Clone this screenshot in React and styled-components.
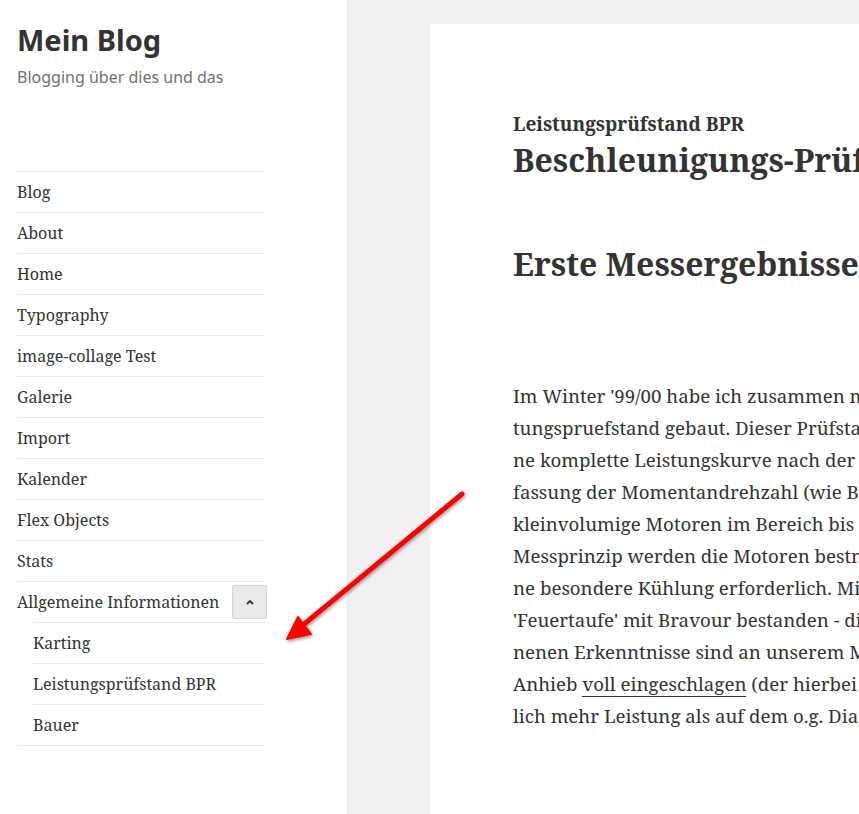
import React from "react";
import styled, { createGlobalStyle } from "styled-components";

const GlobalStyle = createGlobalStyle`
  html, body {
    margin: 0;
    padding: 0;
    height: 100%;
    overflow: hidden;
    background: #f1f1f1;
  }
  #root {
    height: 100%;
  }
`;

const menu = [
  { label: "Blog" },
  { label: "About" },
  { label: "Home" },
  { label: "Typography" },
  { label: "image-collage Test" },
  { label: "Galerie" },
  { label: "Import" },
  { label: "Kalender" },
  { label: "Flex Objects" },
  { label: "Stats" },
  {
    label: "Allgemeine Informationen",
    children: ["Karting", "Leistungsprüfstand BPR", "Bauer"],
  },
];

const lines = [
  "Im Winter '99/00 habe ich zusammen mit einem Freund einen Leis-",
  "tungspruefstand gebaut. Dieser Prüfstand ermöglicht es, ei-",
  "ne komplette Leistungskurve nach der Beschleunigungsmethode, Er-",
  "fassung der Momentandrehzahl (wie Bosch) aufzunehmen, für",
  "kleinvolumige Motoren im Bereich bis 20 PS. Durch dieses",
  "Messprinzip werden die Motoren bestmöglich geschont, es ist kei-",
  "ne besondere Kühlung erforderlich. Mittlerweile hat er seine",
  "'Feuertaufe' mit Bravour bestanden - die damit gewon-",
  "nenen Erkenntnisse sind an unserem Motor gleich auf",
  null,
  "lich mehr Leistung als auf dem o.g. Diagramm zu sehen).",
];

const Page = styled.div`
  display: flex;
  height: 100%;
  position: relative;
`;

const Sidebar = styled.aside`
  width: 347px;
  flex-shrink: 0;
  background: #fff;
  box-shadow: 0 0 1px rgba(0, 0, 0, 0.15);
  padding: 24px 82px 0 17px;
  box-sizing: border-box;
  position: relative;
  z-index: 1;
`;

const SiteTitle = styled.h1`
  margin: 0;
  font-family: "Noto Sans", sans-serif;
  font-weight: 700;
  font-size: 29px;
  line-height: 32px;
  color: #333;
`;

const Tagline = styled.p`
  margin: 9px 0 0;
  font-family: "Noto Sans", sans-serif;
  font-size: 16px;
  line-height: 24px;
  color: #707070;
`;

const NavList = styled.ul`
  list-style: none;
  margin: 82px 0 0;
  padding: 0;
  border-top: 1px solid #eaeaea;
  border-bottom: 1px solid #eaeaea;
  font-family: "Noto Serif", "DejaVu Serif", serif;
`;

const NavItem = styled.li`
  border-top: ${(p) => (p.$first ? "none" : "1px solid #eaeaea")};
`;

const NavRow = styled.div`
  display: flex;
  align-items: center;
  justify-content: space-between;
`;

const NavLink = styled.a`
  display: block;
  padding: 8px 0;
  font-size: 16px;
  line-height: 24px;
  color: #333;
  text-decoration: none;
`;

const Toggle = styled.button`
  width: 35px;
  height: 34px;
  margin-right: -2px;
  padding: 0;
  background: #eaeaea;
  border: 1px solid #d6d6d6;
  border-radius: 2px;
  display: flex;
  align-items: center;
  justify-content: center;
`;

const SubList = styled.ul`
  list-style: none;
  margin: 0 0 0 16px;
  padding: 0;
`;

const SubItem = styled.li`
  border-top: 1px solid #eaeaea;
`;

const Main = styled.main`
  flex: 1;
  overflow: hidden;
  padding: 24px 0 0 83px;
`;

const Card = styled.article`
  width: 760px;
  min-height: 900px;
  background: #fff;
  padding: 86px 0 0 83px;
  box-sizing: border-box;
  font-family: "Noto Serif", "DejaVu Serif", serif;
  color: #333;
`;

const Kicker = styled.div`
  font-size: 19px;
  font-weight: 700;
  line-height: 28px;
  margin-bottom: 2px;
`;

const Title = styled.h1`
  margin: 0;
  font-size: 32px;
  font-weight: 700;
  line-height: 40px;
  white-space: nowrap;
`;

const Subhead = styled.h2`
  margin: 64px 0 0;
  font-size: 32px;
  font-weight: 700;
  line-height: 40px;
  white-space: nowrap;
`;

const Body = styled.p`
  margin: 96px 0 0;
  font-size: 18.7px;
  line-height: 32px;
  white-space: nowrap;
`;

const TextLink = styled.a`
  color: #333;
  text-decoration: none;
  border-bottom: 1px solid #333;
`;

const ArrowLayer = styled.svg`
  position: absolute;
  left: 270px;
  top: 480px;
  width: 210px;
  height: 180px;
  z-index: 2;
  pointer-events: none;
`;

function Chevron() {
  return (
    <svg width="10" height="8" viewBox="0 0 10 8">
      <polyline points="2,6 5,3 8,6" fill="none" stroke="#333" strokeWidth="1.8" />
    </svg>
  );
}

export default function App() {
  return (
    <>
      <GlobalStyle />
      <Page>
        <Sidebar>
          <SiteTitle>Mein Blog</SiteTitle>
          <Tagline>Blogging über dies und das</Tagline>
          <NavList>
            {menu.map((item, i) => (
              <NavItem key={item.label} $first={i === 0}>
                <NavRow>
                  <NavLink href="#">{item.label}</NavLink>
                  {item.children && (
                    <Toggle aria-label="Untermenü">
                      <Chevron />
                    </Toggle>
                  )}
                </NavRow>
                {item.children && (
                  <SubList>
                    {item.children.map((c) => (
                      <SubItem key={c}>
                        <NavLink href="#">{c}</NavLink>
                      </SubItem>
                    ))}
                  </SubList>
                )}
              </NavItem>
            ))}
          </NavList>
        </Sidebar>
        <Main>
          <Card>
            <Kicker>Leistungsprüfstand BPR</Kicker>
            <Title>Beschleunigungs-Prüfstand</Title>
            <Subhead>Erste Messergebnisse</Subhead>
            <Body>
              {lines.map((l, i) =>
                l === null ? (
                  <React.Fragment key={i}>
                    Anhieb <TextLink href="#">voll eingeschlagen</TextLink> (der hierbei gemessene Motor hat deut-
                    <br />
                  </React.Fragment>
                ) : (
                  <React.Fragment key={i}>
                    {l}
                    <br />
                  </React.Fragment>
                )
              )}
            </Body>
          </Card>
        </Main>
        <ArrowLayer viewBox="0 0 210 180">
          <defs>
            <filter id="shadow" x="-20%" y="-20%" width="140%" height="140%">
              <feDropShadow dx="1" dy="2" stdDeviation="1.5" floodColor="#000" floodOpacity="0.35" />
            </filter>
          </defs>
          <g filter="url(#shadow)">
            <line x1="192" y1="14" x2="33" y2="145" stroke="#f00" strokeWidth="5" strokeLinecap="round" />
            <polygon points="17,159 28,137 41,154" fill="#f00" stroke="#f00" strokeWidth="2" strokeLinejoin="round" />
          </g>
        </ArrowLayer>
      </Page>
    </>
  );
}
